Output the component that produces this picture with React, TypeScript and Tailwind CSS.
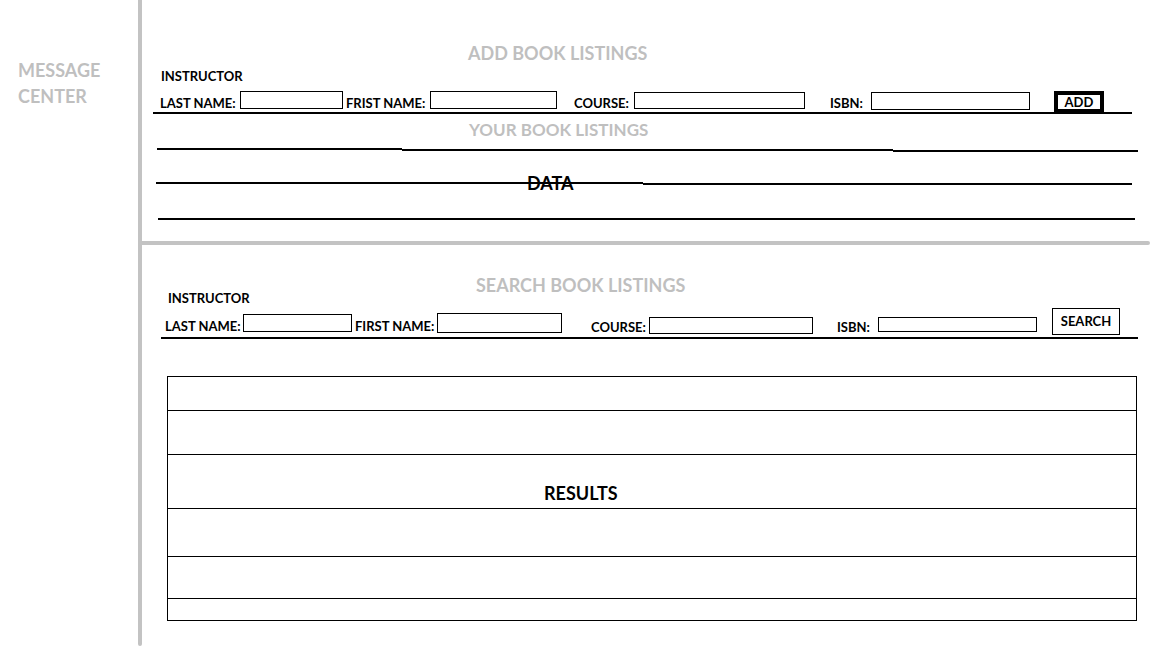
const gray = "text-[#bfbfbf]";

function Field({
  label,
  labelW,
  inputW,
  inputH,
  inputTop,
  labelTop,
  gap,
}: {
  label: string;
  labelW: string;
  inputW: string;
  inputH: string;
  inputTop: string;
  labelTop: string;
  gap: string;
}) {
  return (
    <div className={`flex items-start ${gap}`}>
      <span className={`${labelW} ${labelTop} shrink-0 whitespace-nowrap text-[13px] font-bold leading-[14px] text-black`}>
        {label}
      </span>
      <div className={`${inputW} ${inputH} ${inputTop} shrink-0 border border-black bg-white`} />
    </div>
  );
}

export default function App() {
  return (
    <div className="flex h-[648px] w-[1152px] overflow-hidden bg-white font-['Lato',sans-serif]">
      {/* Sidebar */}
      <aside className="w-[138px] shrink-0 pl-[18px] pt-[57px]">
        <p className={`text-[18px] font-bold leading-[26px] ${gray}`}>
          MESSAGE
          <br />
          CENTER
        </p>
      </aside>

      {/* Vertical divider */}
      <div className="h-[646px] w-[4px] shrink-0 rounded-b bg-[#c3c3c3]" />

      <main className="flex flex-1 flex-col">
        {/* Add book listings */}
        <section className="h-[241px]">
          <h2 className={`ml-[326px] mt-[44px] text-[18px] font-bold leading-[18px] ${gray}`}>
            ADD BOOK LISTINGS
          </h2>
          <p className="ml-[19px] mt-[7px] text-[13px] font-bold leading-[14px] text-black">INSTRUCTOR</p>

          <div className="ml-[18px] mt-[8px] flex h-[21px] items-start">
            <Field label="LAST NAME:" labelW="w-[80px]" inputW="w-[103px]" inputH="h-[18px]" inputTop="mt-0" labelTop="mt-[5px]" gap="" />
            <Field label="FRIST NAME:" labelW="w-[84px]" inputW="w-[127px]" inputH="h-[18px]" inputTop="mt-0" labelTop="mt-[5px]" gap="ml-[3px]" />
            <Field label="COURSE:" labelW="w-[60px]" inputW="w-[171px]" inputH="h-[17px]" inputTop="mt-[1px]" labelTop="mt-[5px]" gap="ml-[17px]" />
            <Field label="ISBN:" labelW="w-[41px]" inputW="w-[159px]" inputH="h-[18px]" inputTop="mt-[1px]" labelTop="mt-[5px]" gap="ml-[25px]" />
            <button className="ml-[24px] flex h-[22px] w-[50px] items-center justify-center border-[4px] border-black bg-white text-[13px] font-bold leading-none text-black">
              ADD
            </button>
          </div>
          <div className="ml-[11px] mt-0 h-[2px] w-[979px] bg-black" />

          <h3 className={`ml-[327px] mt-[7px] text-[17px] font-bold leading-[18px] ${gray}`}>
            YOUR BOOK LISTINGS
          </h3>

          {/* Listing rows */}
          <div className="ml-[15px] mt-[9px] flex h-[3px] items-start">
            <div className="h-[1.5px] w-[245px] bg-black" />
            <div className="mt-px h-[1.5px] w-[491px] bg-black" />
            <div className="mt-[2px] h-[1.5px] w-[245px] bg-black" />
          </div>
          <div className="relative ml-[14px] mt-[31px] flex h-[2px] items-start">
            <div className="h-[1.5px] w-[487px] bg-black" />
            <div className="mt-px h-[1.5px] w-[489px] bg-black" />
            <span className="absolute left-[371px] top-[-8px] text-[18px] font-bold leading-[18px] text-black">DATA</span>
          </div>
          <div className="ml-[16px] mt-[34px] h-[1.5px] w-[977px] bg-black" />
        </section>

        {/* Horizontal divider */}
        <div className="h-[4px] w-[1008px] rounded-r-full bg-[#c3c3c3]" />

        {/* Search book listings */}
        <section className="flex-1">
          <h2 className={`ml-[334px] mt-[31px] text-[18px] font-bold leading-[18px] ${gray}`}>
            SEARCH BOOK LISTINGS
          </h2>
          <p className="ml-[26px] -mt-[3px] text-[13px] font-bold leading-[14px] text-black">INSTRUCTOR</p>

          <div className="ml-[23px] mt-[3px] flex h-[27px] items-start">
            <Field label="LAST NAME:" labelW="w-[78px]" inputW="w-[109px]" inputH="h-[18px]" inputTop="mt-[6px]" labelTop="mt-[11px]" gap="" />
            <Field label="FIRST NAME:" labelW="w-[82px]" inputW="w-[125px]" inputH="h-[20px]" inputTop="mt-[5px]" labelTop="mt-[11px]" gap="ml-[3px]" />
            <Field label="COURSE:" labelW="w-[58px]" inputW="w-[164px]" inputH="h-[17px]" inputTop="mt-[9px]" labelTop="mt-[12px]" gap="ml-[29px]" />
            <Field label="ISBN:" labelW="w-[41px]" inputW="w-[159px]" inputH="h-[15px]" inputTop="mt-[9px]" labelTop="mt-[12px]" gap="ml-[24px]" />
            <button className="ml-[15px] flex h-[27px] w-[68px] items-center justify-center border border-black bg-white text-[13px] font-bold leading-none text-black">
              SEARCH
            </button>
          </div>
          <div className="ml-[19px] mt-[2px] h-[1.5px] w-[977px] bg-black" />

          {/* Results table */}
          <div className="ml-[25px] mt-[37px] flex h-[245px] w-[970px] flex-col border-[1.5px] border-black">
            <div className="h-[34px] shrink-0 border-b-[1.5px] border-black" />
            <div className="h-[44px] shrink-0 border-b-[1.5px] border-black" />
            <div className="h-[54px] shrink-0 border-b-[1.5px] border-black pl-[376px] pt-[27px]">
              <span className="text-[18px] font-bold leading-[18px] text-black">RESULTS</span>
            </div>
            <div className="h-[48px] shrink-0 border-b-[1.5px] border-black" />
            <div className="h-[42px] shrink-0 border-b-[1.5px] border-black" />
            <div className="flex-1" />
          </div>
        </section>
      </main>
    </div>
  );
}
